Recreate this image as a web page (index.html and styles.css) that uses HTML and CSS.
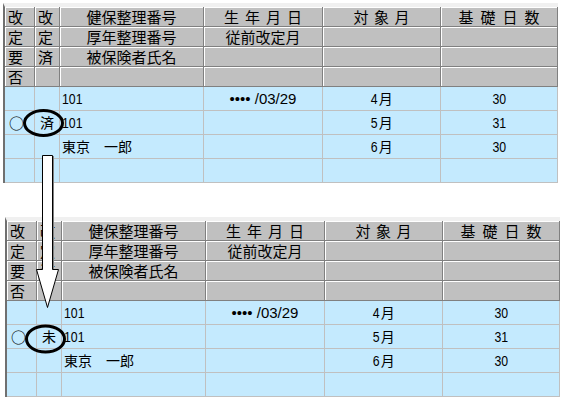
FILE: index.html
```html
<!DOCTYPE html>
<html>
<head>
<meta charset="utf-8">
<link rel="stylesheet" href="styles.css">
</head>
<body>
<div class="page">

  <!-- before: row already revised -->
  <div class="grid first">
    <div class="hd side">改</div><div class="hd side">改</div><div class="hd">健保整理番号</div><div class="hd"><span class="sp6">生年月日</span></div><div class="hd"><span class="sp5">対象月</span></div><div class="hd"><span class="sp7">基礎日数</span></div>
    <div class="hd side">定</div><div class="hd side">定</div><div class="hd">厚年整理番号</div><div class="hd">従前改定月</div><div class="hd"></div><div class="hd"></div>
    <div class="hd side">要</div><div class="hd side">済</div><div class="hd">被保険者氏名</div><div class="hd"></div><div class="hd"></div><div class="hd"></div>
    <div class="hd side">否</div><div class="hd side"></div><div class="hd"></div><div class="hd"></div><div class="hd"></div><div class="hd"></div>

    <div class="cell"></div><div class="cell"></div><div class="cell left"><span class="num">101</span></div><div class="cell"><span class="date">•••• /03/29</span></div><div class="cell"><span class="num">4</span>月</div><div class="cell"><span class="num">30</span></div>
    <div class="cell mark">○</div><div class="cell">済</div><div class="cell left"><span class="num">101</span></div><div class="cell"></div><div class="cell"><span class="num">5</span>月</div><div class="cell"><span class="num">31</span></div>
    <div class="cell"></div><div class="cell"></div><div class="cell left">東京　一郎</div><div class="cell"></div><div class="cell"><span class="num">6</span>月</div><div class="cell"><span class="num">30</span></div>
    <div class="cell"></div><div class="cell"></div><div class="cell"></div><div class="cell"></div><div class="cell"></div><div class="cell"></div>
  </div>

  <!-- after: flag reset to not revised -->
  <div class="grid second">
    <div class="hd side">改</div><div class="hd side">改</div><div class="hd">健保整理番号</div><div class="hd"><span class="sp6">生年月日</span></div><div class="hd"><span class="sp5">対象月</span></div><div class="hd"><span class="sp7">基礎日数</span></div>
    <div class="hd side">定</div><div class="hd side">定</div><div class="hd">厚年整理番号</div><div class="hd">従前改定月</div><div class="hd"></div><div class="hd"></div>
    <div class="hd side">要</div><div class="hd side">済</div><div class="hd">被保険者氏名</div><div class="hd"></div><div class="hd"></div><div class="hd"></div>
    <div class="hd side">否</div><div class="hd side"></div><div class="hd"></div><div class="hd"></div><div class="hd"></div><div class="hd"></div>

    <div class="cell"></div><div class="cell"></div><div class="cell left"><span class="num">101</span></div><div class="cell"><span class="date">•••• /03/29</span></div><div class="cell"><span class="num">4</span>月</div><div class="cell"><span class="num">30</span></div>
    <div class="cell mark">○</div><div class="cell">未</div><div class="cell left"><span class="num">101</span></div><div class="cell"></div><div class="cell"><span class="num">5</span>月</div><div class="cell"><span class="num">31</span></div>
    <div class="cell"></div><div class="cell"></div><div class="cell left">東京　一郎</div><div class="cell"></div><div class="cell"><span class="num">6</span>月</div><div class="cell"><span class="num">30</span></div>
    <div class="cell"></div><div class="cell"></div><div class="cell"></div><div class="cell"></div><div class="cell"></div><div class="cell"></div>
  </div>

  <!-- callout marks drawn over the grids -->
  <svg class="marks" width="567" height="400" viewBox="0 0 567 400">
    <ellipse cx="43.5" cy="120" rx="19" ry="12.5" fill="none" stroke="#000" stroke-width="3"/>
    <ellipse cx="45.5" cy="336" rx="19" ry="13" fill="none" stroke="#000" stroke-width="3"/>
    <polygon points="42.5,152.5 52.5,152.5 52.5,266.5 58.5,266.5 47.5,304.5 36.5,266.5 42.5,266.5" fill="#fff" stroke="#000" stroke-width="1"/>
    <line x1="53.5" y1="153" x2="53.5" y2="266" stroke="#808080" stroke-width="1"/>
  </svg>
</div>
</body>
</html>
```

FILE: styles.css
```css
body {
  margin: 0;
  background-color: #fff;
  font-family: "Noto Sans CJK JP", sans-serif;
  color: #000;
}

.page {
  position: relative;
  width: 567px;
  height: 400px;
}

/* spreadsheet style grid */
.grid {
  display: grid;
  grid-template-columns: 30px 25px 144px 119px 118px 117px;
  grid-template-rows: repeat(4, 20px) repeat(4, 24px);
  width: max-content;
  border-left: 2px solid #707070;
  border-top: 4px solid #f0f0f0;
}

.first {
  margin: 3px 0 0 3px;
}

.second {
  margin: 34px 0 0 5px;
}

.hd, .cell {
  box-sizing: border-box;
  white-space: nowrap;
  overflow: hidden;
  text-align: center;
}

/* fixed header cells */
.hd {
  background-color: #c0c0c0;
  border-right: 1px solid #808080;
  border-bottom: 1px solid #808080;
  box-shadow: inset 1px 1px 0 #fff;
  font-size: 15px;
  line-height: 19px;
}

.hd.side {
  text-align: left;
  padding-left: 3px;
}

.sp5 { letter-spacing: 5.5px; padding-left: 5.5px; }
.sp6 { letter-spacing: 6px; padding-left: 6px; }
.sp7 { letter-spacing: 7px; padding-left: 7px; }

/* data cells */
.cell {
  background-color: #c4eafe;
  border-right: 1px solid #c0c0c0;
  border-bottom: 1px solid #c0c0c0;
  font-size: 14px;
  line-height: 23px;
}

.cell.left {
  text-align: left;
  padding-left: 2px;
}

.cell.mark {
  text-align: left;
  padding-left: 4px;
  font-size: 15px;
}

/* narrow digits */
.num {
  display: inline-block;
  font-family: "Liberation Sans", sans-serif;
  font-size: 15px;
  transform: scaleX(0.82);
}

.cell.left .num {
  transform-origin: left center;
}

.date {
  font-family: "Liberation Sans", sans-serif;
  font-size: 15px;
}

.marks {
  position: absolute;
  left: 0;
  top: 0;
  pointer-events: none;
}
```
